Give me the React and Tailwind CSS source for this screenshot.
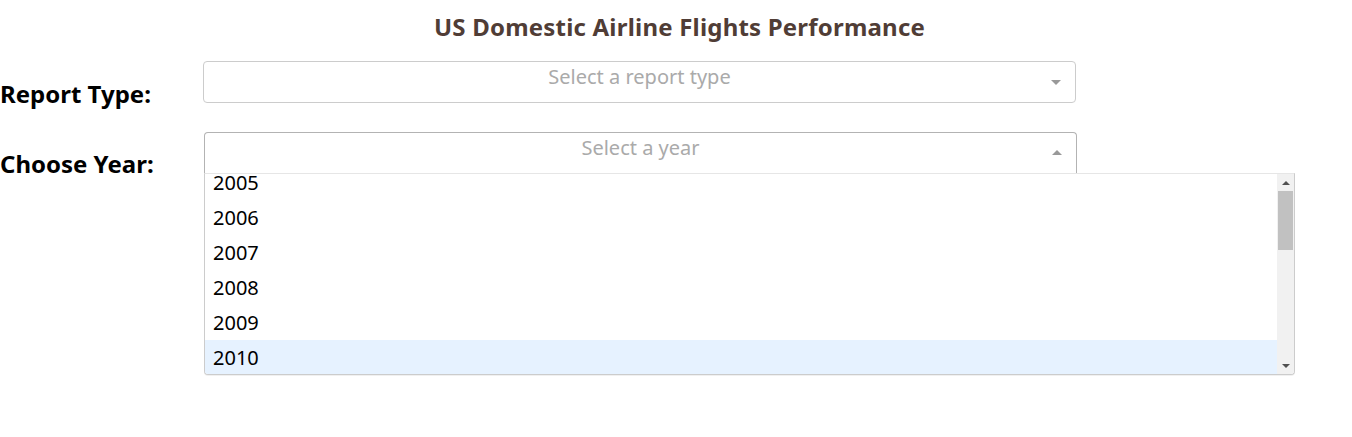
import React from 'react';

const years = ['2005', '2006', '2007', '2008', '2009', '2010'];

function Caret({ up }) {
  return (
    <span
      className={
        up
          ? 'w-0 h-0 border-x-[5px] border-x-transparent border-b-[5px] border-b-[#999]'
          : 'w-0 h-0 border-x-[5px] border-x-transparent border-t-[5px] border-t-[#999]'
      }
    />
  );
}

export default function App() {
  return (
    <div className="w-[1352px] h-[437px] bg-white text-black" style={{ fontFamily: '"Noto Sans", "Open Sans", sans-serif' }}>
      <h1 className="pt-[11px] pl-[7px] text-center text-[24px] leading-[32px] font-bold text-[#503D36] tracking-[0.2px]">
        US Domestic Airline Flights Performance
      </h1>

      <div className="flex mt-[18px]">
        <div className="w-[203px] pt-[18px] text-[24px] leading-[30px] font-bold">Report Type:</div>
        <div className="relative w-[873px] h-[42px] border border-[#ccc] rounded-[4px] bg-white">
          <div className="text-center text-[20px] leading-[30px] text-[#aaa]">Select a report type</div>
          <div className="absolute right-[14px] top-[18px] flex"><Caret /></div>
        </div>
      </div>

      <div className="flex mt-[23px]">
        <div className="w-[204px] pt-[17px] text-[24px] leading-[30px] font-bold">Choose Year:</div>
        <div className="relative">
          <div className="relative w-[873px] h-[42px] border border-[#b3b3b3] border-b-0 rounded-t-[4px] bg-white">
            <div className="text-center text-[20px] leading-[30px] text-[#aaa]">Select a year</div>
            <div className="absolute right-[14px] top-[17px] flex"><Caret up /></div>
          </div>
          <div className="absolute left-0 top-[41px] w-[1091px] h-[202px] border border-[#ccc] border-t-[#e6e6e6] rounded-b-[4px] bg-white flex overflow-hidden shadow-[0_1px_0_rgba(0,0,0,0.06)]">
            <div className="flex-1 overflow-hidden">
              <div className="-mt-[9px]">
                {years.map((y) => (
                  <div
                    key={y}
                    className={
                      y === '2010'
                        ? 'h-[35px] pl-[8px] text-[20px] leading-[35px] bg-[#e6f2ff]'
                        : 'h-[35px] pl-[8px] text-[20px] leading-[35px]'
                    }
                  >
                    {y}
                  </div>
                ))}
              </div>
            </div>
            <div className="w-[17px] bg-[#f1f1f1] flex flex-col items-center">
              <div className="h-[17px] flex items-center justify-center">
                <span className="w-0 h-0 border-x-[4px] border-x-transparent border-b-[4px] border-b-[#505050]" />
              </div>
              <div className="w-[15px] h-[59px] bg-[#c1c1c1]" />
              <div className="flex-1" />
              <div className="h-[17px] flex items-center justify-center">
                <span className="w-0 h-0 border-x-[4px] border-x-transparent border-t-[4px] border-t-[#505050]" />
              </div>
            </div>
          </div>
        </div>
      </div>
    </div>
  );
}
